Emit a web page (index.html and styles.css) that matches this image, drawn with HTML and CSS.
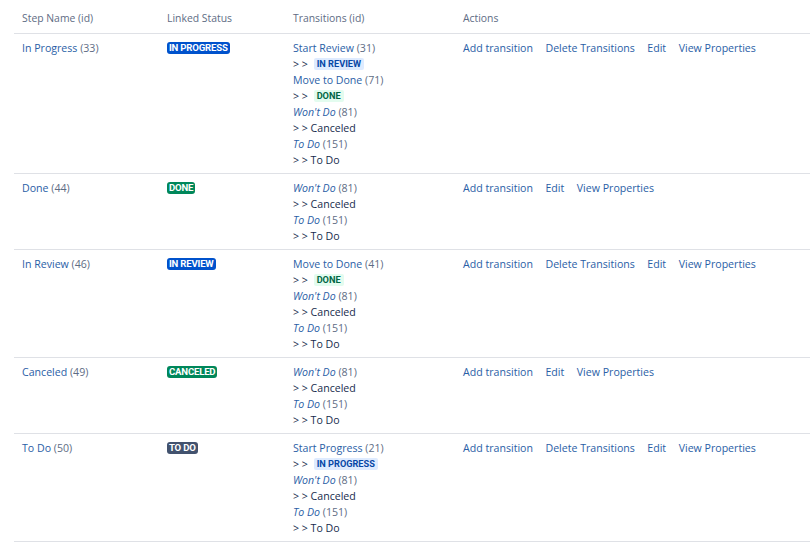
FILE: index.html
```html
<!DOCTYPE html>
<html>
<head>
<meta charset="utf-8">
<link rel="stylesheet" href="styles.css">
</head>
<body>
<table class="steps">
  <colgroup>
    <col class="c-name"><col class="c-status"><col class="c-trans"><col class="c-actions">
  </colgroup>
  <thead>
    <tr><th>Step Name (id)</th><th>Linked Status</th><th>Transitions (id)</th><th>Actions</th></tr>
  </thead>
  <tbody>
    <tr>
      <td><a class="link">In Progress</a> <span class="id">(33)</span></td>
      <td><span class="badge blue">IN PROGRESS</span></td>
      <td>
        <div><a class="link">Start Review</a> <span class="id">(31)</span></div>
        <div class="to">&gt; &gt; <span class="loz lblue">IN REVIEW</span></div>
        <div><a class="link">Move to Done</a> <span class="id">(71)</span></div>
        <div class="to">&gt; &gt; <span class="loz lgreen">DONE</span></div>
        <div><a class="link it">Won't Do</a> <span class="id">(81)</span></div>
        <div class="to">&gt; &gt; Canceled</div>
        <div><a class="link it">To Do</a> <span class="id">(151)</span></div>
        <div class="to">&gt; &gt; To Do</div>
      </td>
      <td class="actions"><a class="link">Add transition</a><a class="link">Delete Transitions</a><a class="link">Edit</a><a class="link">View Properties</a></td>
    </tr>
    <tr>
      <td><a class="link">Done</a> <span class="id">(44)</span></td>
      <td><span class="badge green">DONE</span></td>
      <td>
        <div><a class="link it">Won't Do</a> <span class="id">(81)</span></div>
        <div class="to">&gt; &gt; Canceled</div>
        <div><a class="link it">To Do</a> <span class="id">(151)</span></div>
        <div class="to">&gt; &gt; To Do</div>
      </td>
      <td class="actions"><a class="link">Add transition</a><a class="link">Edit</a><a class="link">View Properties</a></td>
    </tr>
    <tr>
      <td><a class="link">In Review</a> <span class="id">(46)</span></td>
      <td><span class="badge blue">IN REVIEW</span></td>
      <td>
        <div><a class="link">Move to Done</a> <span class="id">(41)</span></div>
        <div class="to">&gt; &gt; <span class="loz lgreen">DONE</span></div>
        <div><a class="link it">Won't Do</a> <span class="id">(81)</span></div>
        <div class="to">&gt; &gt; Canceled</div>
        <div><a class="link it">To Do</a> <span class="id">(151)</span></div>
        <div class="to">&gt; &gt; To Do</div>
      </td>
      <td class="actions"><a class="link">Add transition</a><a class="link">Delete Transitions</a><a class="link">Edit</a><a class="link">View Properties</a></td>
    </tr>
    <tr>
      <td><a class="link">Canceled</a> <span class="id">(49)</span></td>
      <td><span class="badge green">CANCELED</span></td>
      <td>
        <div><a class="link it">Won't Do</a> <span class="id">(81)</span></div>
        <div class="to">&gt; &gt; Canceled</div>
        <div><a class="link it">To Do</a> <span class="id">(151)</span></div>
        <div class="to">&gt; &gt; To Do</div>
      </td>
      <td class="actions"><a class="link">Add transition</a><a class="link">Edit</a><a class="link">View Properties</a></td>
    </tr>
    <tr>
      <td><a class="link">To Do</a> <span class="id">(50)</span></td>
      <td><span class="badge gray">TO DO</span></td>
      <td>
        <div><a class="link">Start Progress</a> <span class="id">(21)</span></div>
        <div class="to">&gt; &gt; <span class="loz lblue">IN PROGRESS</span></div>
        <div><a class="link it">Won't Do</a> <span class="id">(81)</span></div>
        <div class="to">&gt; &gt; Canceled</div>
        <div><a class="link it">To Do</a> <span class="id">(151)</span></div>
        <div class="to">&gt; &gt; To Do</div>
      </td>
      <td class="actions"><a class="link">Add transition</a><a class="link">Delete Transitions</a><a class="link">Edit</a><a class="link">View Properties</a></td>
    </tr>
  </tbody>
</table>
</body>
</html>
```
FILE: styles.css
```css
html, body {
  margin: 0;
  padding: 0;
  background: #ffffff;
}
body {
  font-family: "Open Sans", "Noto Sans", sans-serif;
  font-size: 10.6px;
  line-height: 16px;
  color: #172b4d;
}
.steps {
  margin-left: 14px;
  width: 796px;
  border-collapse: collapse;
  table-layout: fixed;
}
.c-name { width: 145px; }
.c-status { width: 126px; }
.c-trans { width: 170px; }
th {
  text-align: left;
  font-weight: normal;
  color: #5e6c84;
  font-size: 10.4px;
  padding: 10px 8px 7px 8px;
  border-bottom: 1px solid #dfe1e6;
  height: 16px;
}
td {
  vertical-align: top;
  padding: 6px 8px 5px 8px;
  border-bottom: 1px solid #dfe1e6;
}
.link {
  color: #2a5ea6;
  text-decoration: none;
}
.it { font-style: italic; }
.id { color: #5e6c84; }
.to {
  color: #172b4d;
  height: 16px;
}
.actions .link { margin-right: 12.5px; }
.badge {
  display: inline-block;
  font-family: Roboto, "Liberation Sans", sans-serif;
  font-size: 9.6px;
  font-weight: 700;
  line-height: 12px;
  padding: 0 2px;
  border-radius: 3px;
  color: #fff;
  letter-spacing: -0.2px;
  vertical-align: top;
  margin-top: 2px;
}
.blue { background: #0052cc; }
.green { background: #00875a; }
.gray { background: #42526e; }
.loz {
  display: inline-block;
  font-family: Roboto, "Liberation Sans", sans-serif;
  font-size: 9.2px;
  font-weight: 700;
  line-height: 12px;
  padding: 0 3px;
  border-radius: 2px;
  margin-left: 3px;
  vertical-align: top;
  margin-top: 2px;
}
.lblue { background: #deebff; color: #0747a6; }
.lgreen { background: #e3fcef; color: #006644; }
```
